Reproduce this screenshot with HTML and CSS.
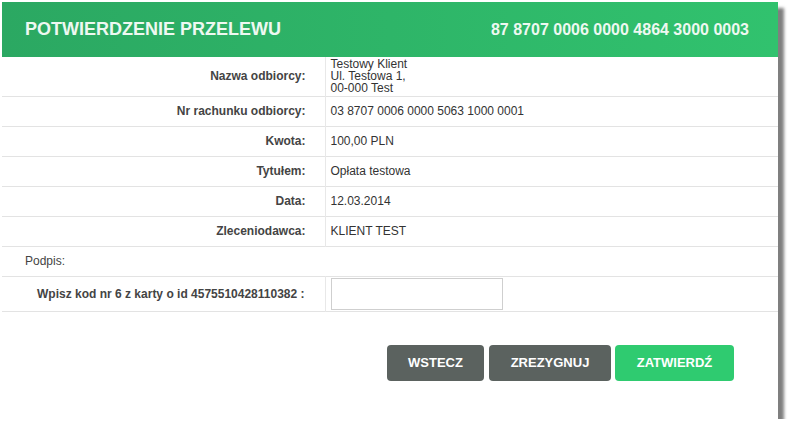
FILE: index.html
```html
<!DOCTYPE html>
<html>
<head>
    <title>Potwierdzenie przelewu</title>
    <link rel="stylesheet" href="styles.css">
</head>
<body>
    <div class="panel">
        <div class="panel-header">
            <h1>POTWIERDZENIE PRZELEWU</h1>
            <span class="account">87 8707 0006 0000 4864 3000 0003</span>
        </div>

        <table class="details">
            <tr class="multi">
                <th>Nazwa odbiorcy:</th>
                <td>Testowy Klient<br>Ul. Testowa 1,<br>00-000 Test</td>
            </tr>
            <tr>
                <th>Nr rachunku odbiorcy:</th>
                <td>03 8707 0006 0000 5063 1000 0001</td>
            </tr>
            <tr>
                <th>Kwota:</th>
                <td>100,00 PLN</td>
            </tr>
            <tr>
                <th>Tytułem:</th>
                <td>Opłata testowa</td>
            </tr>
            <tr>
                <th>Data:</th>
                <td>12.03.2014</td>
            </tr>
            <tr>
                <th>Zleceniodawca:</th>
                <td>KLIENT TEST</td>
            </tr>
            <tr class="sign">
                <td colspan="2">Podpis:</td>
            </tr>
            <tr class="code">
                <th>Wpisz kod nr 6 z karty o id 4575510428110382 :</th>
                <td><input type="text" id="code"></td>
            </tr>
        </table>

        <div class="actions">
            <button class="btn btn-dark">WSTECZ</button>
            <button class="btn btn-dark">ZREZYGNUJ</button>
            <button class="btn btn-green">ZATWIERDŹ</button>
        </div>
    </div>
</body>
</html>
```

FILE: styles.css
```css
/* Reset */
* {
    margin: 0;
    padding: 0;
    box-sizing: border-box;
}

body {
    background-color: #fff;
    font-family: "Liberation Sans", Arial, sans-serif;
    font-size: 12px;
    color: #333;
}

/* Main dialog */
.panel {
    width: 776px;
    height: 417px;
    margin: 2px 0 0 2px;
    background-color: #fff;
    box-shadow: 6px 6px 3px rgba(0, 0, 0, 0.5);
}

.panel-header {
    height: 55px;
    display: flex;
    align-items: center;
    justify-content: space-between;
    padding: 0 29px 0 23px;
    background: linear-gradient(to right, #2ba862, #31c26e);
    color: #eef8f1;
}

.panel-header h1 {
    font-size: 18px;
    font-weight: bold;
}

.account {
    font-size: 16px;
    font-weight: bold;
}

/* Details table */
.details {
    width: 100%;
    border-collapse: collapse;
}

.details tr {
    height: 30px;
    border-bottom: 1px solid #e3e3e3;
}

.details th {
    width: 323px;
    text-align: right;
    padding-right: 19px;
    font-weight: bold;
    color: #444;
    border-right: 1px solid #e8e8e8;
}

.details td {
    padding-left: 5px;
    color: #333;
}

.details tr.multi {
    height: 39px;
}

.details tr.multi td {
    line-height: 12px;
}

.details tr.sign td {
    padding-left: 23px;
    color: #444;
}

.details tr.code {
    height: 35px;
}

.details tr.code th {
    padding-right: 20px;
}

#code {
    display: block;
    width: 172px;
    height: 32px;
    border: 1px solid #cfcfcf;
}

/* Buttons */
.actions {
    display: flex;
    justify-content: flex-end;
    gap: 5px;
    padding: 33px 44px 0 0;
}

.btn {
    height: 36px;
    border: none;
    border-radius: 4px;
    color: #fff;
    font-family: "Liberation Sans", Arial, sans-serif;
    font-size: 13px;
    font-weight: bold;
    cursor: pointer;
}

.btn-dark {
    background-color: #5b625f;
}

.btn-dark:first-child {
    width: 97px;
}

.btn-dark:nth-child(2) {
    width: 122px;
}

.btn-green {
    width: 119px;
    background-color: #2fcb70;
    margin-left: -1px;
}
```
